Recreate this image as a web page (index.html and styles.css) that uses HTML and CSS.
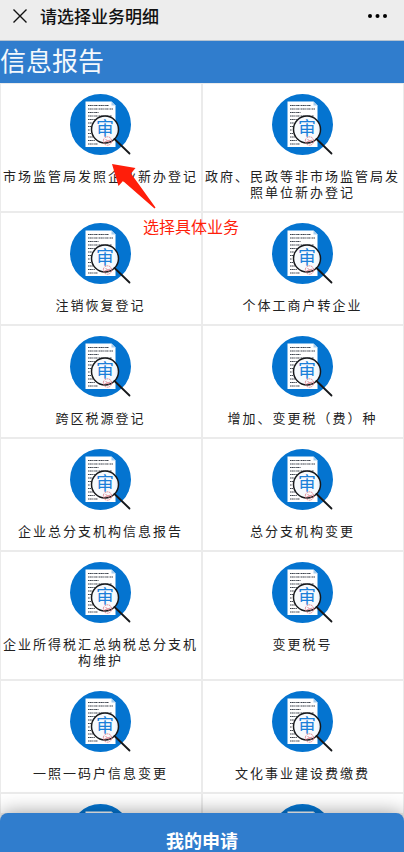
FILE: index.html
```html
<!DOCTYPE html>
<html lang="zh-CN">
<head>
    <meta charset="UTF-8">
    <meta name="viewport" content="width=device-width, initial-scale=1">
    <title>请选择业务明细</title>
    <link rel="stylesheet" href="styles.css">
</head>
<body>
    <svg class="sprite" aria-hidden="true">
        <symbol id="icon-audit" viewBox="0 0 61 61">
            <circle cx="30.5" cy="30.5" r="30.5" fill="#0474d0"/>
            <path d="M15.5 7.5h26l4 4V53h-30z" fill="#fff"/>
            <path d="M41.500 7.500v4h4z" fill="#a9cdec"/>
            <g stroke="#3c434d" stroke-width="1.100" stroke-dasharray="1.300 .4 2 .5 .8 .5" fill="none">
                <path d="M18 11.500h21M18 15h25M18 18.500h11M18 22h24M18 25.500h7M18 29h4M18 32.500h3M18 36h2M18 39.500h3M18 43h5M18 46.500h7M18 50h10"/>
            </g>
            <circle cx="35" cy="35.500" r="13.500" fill="#f7fafd" fill-opacity=".95" stroke="#16181b" stroke-width="1.500"/>
            <text class="icon-char" x="35" y="41" text-anchor="middle">审</text>
            <g fill="none" stroke="#d9707c" stroke-width=".8">
                <circle cx="37.500" cy="47" r="4.200" stroke-dasharray="2 .6"/>
                <path d="M34.500 48l6-2M35.500 45l4 4"/>
            </g>
            <path d="M44.500 45L59.500 59.500" stroke="#16181b" stroke-width="1.800" stroke-linecap="round"/>
        </symbol>
    </svg>

    <div class="page">
        <header class="navbar">
            <button type="button" class="nav-button" aria-label="关闭">
                <svg width="16" height="16" viewBox="0 0 16 16"><path d="M1.5 1.5l13 13M14.5 1.5l-13 13" stroke="#111" stroke-width="1.4"/></svg>
            </button>
            <h1>请选择业务明细</h1>
            <button type="button" class="nav-button" aria-label="更多">
                <svg width="20" height="6" viewBox="0 0 20 6"><circle cx="3" cy="3" r="2"/><circle cx="10.5" cy="3" r="2"/><circle cx="18" cy="3" r="2"/></svg>
            </button>
        </header>

        <h2 class="section-title">信息报告</h2>

        <main class="grid">
            <a class="item" href="#"><svg class="icon"><use href="#icon-audit"/></svg><span>市场监管局发照企业新办登记</span></a>
            <a class="item" href="#"><svg class="icon"><use href="#icon-audit"/></svg><span>政府、民政等非市场监管局发照单位新办登记</span></a>
            <a class="item" href="#"><svg class="icon"><use href="#icon-audit"/></svg><span>注销恢复登记</span></a>
            <a class="item" href="#"><svg class="icon"><use href="#icon-audit"/></svg><span>个体工商户转企业</span></a>
            <a class="item" href="#"><svg class="icon"><use href="#icon-audit"/></svg><span>跨区税源登记</span></a>
            <a class="item" href="#"><svg class="icon"><use href="#icon-audit"/></svg><span>增加、变更税（费）种</span></a>
            <a class="item" href="#"><svg class="icon"><use href="#icon-audit"/></svg><span>企业总分支机构信息报告</span></a>
            <a class="item" href="#"><svg class="icon"><use href="#icon-audit"/></svg><span>总分支机构变更</span></a>
            <a class="item" href="#"><svg class="icon"><use href="#icon-audit"/></svg><span>企业所得税汇总纳税总分支机构维护</span></a>
            <a class="item" href="#"><svg class="icon"><use href="#icon-audit"/></svg><span>变更税号</span></a>
            <a class="item" href="#"><svg class="icon"><use href="#icon-audit"/></svg><span>一照一码户信息变更</span></a>
            <a class="item" href="#"><svg class="icon"><use href="#icon-audit"/></svg><span>文化事业建设费缴费</span></a>
            <a class="item" href="#"><svg class="icon"><use href="#icon-audit"/></svg></a>
            <a class="item" href="#"><svg class="icon"><use href="#icon-audit"/></svg></a>

            <div class="hint">
                <svg width="44" height="46" viewBox="0 0 44 46"><path d="M0 0L23.5 4L19 9.500L43.500 43.500L42.500 44.500L11 17L6.500 22z" fill="#ff1e0a"/></svg>
                <span>选择具体业务</span>
            </div>
        </main>

        <button type="button" class="apply-button">我的申请</button>
    </div>
</body>
</html>
```
FILE: styles.css
```css
* {
    box-sizing: border-box;
}
body {
    margin: 0;
    font-family: "Noto Sans CJK SC", sans-serif;
    color: #222;
    background-color: #ececec;
}
.sprite {
    position: absolute;
    width: 0;
    height: 0;
}
.page {
    display: flex;
    flex-direction: column;
    height: 100vh;
    overflow: hidden;
}
.navbar {
    display: flex;
    flex: none;
    align-items: center;
    gap: 12px;
    padding: 4px 17px 12px 12px;
    border-bottom: 1px solid #b5c3d0;
    background-color: #ededed;
}
.navbar h1 {
    flex: 1;
    margin: 0;
    font-size: 17px;
    font-weight: 500;
    line-height: 24px;
    color: #111;
}
.nav-button {
    display: flex;
    padding: 0;
    border: none;
    background: none;
    cursor: pointer;
}
.section-title {
    flex: none;
    margin: 0;
    padding-bottom: 4px;
    font-size: 26px;
    font-weight: 400;
    line-height: 38px;
    color: #f4f8fc;
    background-color: #307dcd;
}
.grid {
    position: relative;
    display: grid;
    flex: 1;
    grid-template-columns: 1fr 1fr;
    grid-auto-rows: max-content;
    gap: 2px;
    min-height: 0;
    padding: 1px;
    overflow: hidden;
    background-color: #ebebeb;
}
.item {
    display: flex;
    flex-direction: column;
    align-items: center;
    gap: 13px;
    padding: 10px 1px 11px 0;
    font-size: 13px;
    line-height: 16px;
    letter-spacing: 2px;
    text-align: center;
    text-decoration: none;
    color: #222;
    background-color: #fff;
}
.icon {
    width: 61px;
    height: 61px;
}
.icon-char {
    font-size: 18px;
    font-weight: 400;
    letter-spacing: 0;
    fill: #1b7fd9;
}
/* floats over the first tile */
.hint {
    position: absolute;
    top: 81px;
    left: 112px;
    display: flex;
    flex-direction: column;
    gap: 4px;
    font-size: 16px;
    line-height: 24px;
    color: #ff1e0a;
}
.hint span {
    padding-left: 31px;
}
.apply-button {
    position: relative;
    flex: none;
    padding: 15px 0 0;
    border: none;
    border-radius: 8px 8px 0 0;
    font-family: inherit;
    font-size: 18px;
    font-weight: 700;
    line-height: 24px;
    color: #fff;
    background-color: #307dcd;
    box-shadow: 0 0 20px rgba(0, 0, 0, 0.4);
    cursor: pointer;
}
```
